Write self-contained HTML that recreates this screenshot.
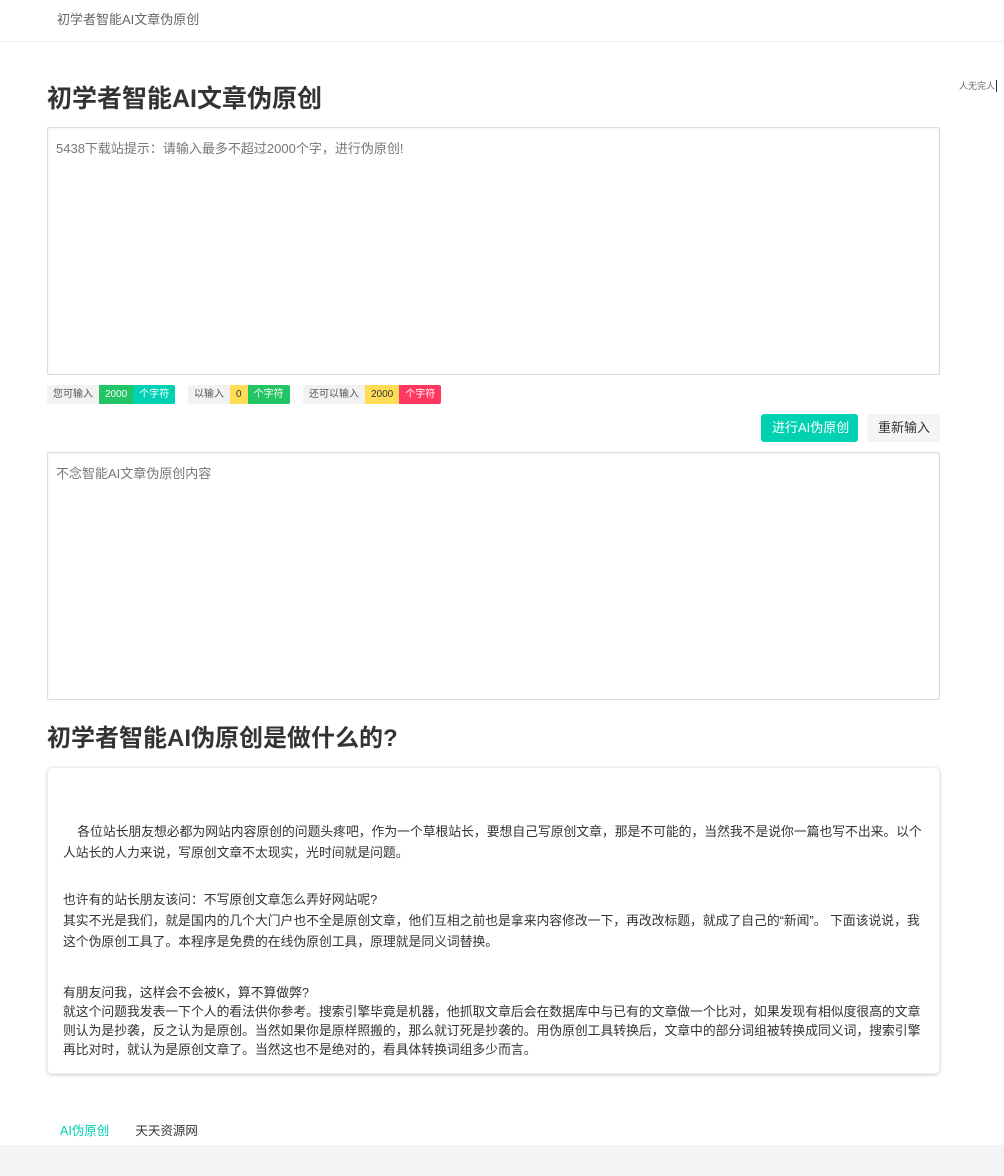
<!DOCTYPE html>
<html><head><meta charset="utf-8"><style>
*{box-sizing:border-box;margin:0;padding:0}
body{width:1004px;height:1176px;background:#fff;font-family:"Liberation Sans","Noto Sans CJK SC",sans-serif;color:#333;position:relative;overflow:hidden}
.hdr{height:42px;border-bottom:1px solid #eee;padding-left:57px;line-height:40px;font-size:13px;color:#666}
.side{position:absolute;left:959px;top:80px;font-size:9px;color:#666;border-right:1px solid #333;padding-right:1px;line-height:12px}
h1{position:absolute;left:47px;top:79px;font-size:25px;font-weight:bold;color:#333}
.ta{position:absolute;left:47px;width:893px;border:1px solid #ddd;border-radius:2px;padding:10px 8px;font-size:13px;color:#777;box-shadow:inset 0 1px 2px rgba(0,0,0,.06)}
.bd{position:absolute;top:385px;height:19px;font-size:10px;line-height:19px;display:flex;border-radius:2px;overflow:hidden;white-space:nowrap}
.bd span{padding:0 6px}
.g{background:#f2f2f2;color:#555}.gr{background:#22c463;color:#fff}.tq{background:#00d1b2;color:#fff}.y{background:#ffdd57;color:#333}.r{background:#ff3860;color:#fff}
.btn{position:absolute;top:414px;height:28px;line-height:28px;font-size:13px;border-radius:3px;padding:0 11px;white-space:nowrap}
h2{position:absolute;left:47px;top:718px;font-size:24px;font-weight:bold;color:#333}
.box{position:absolute;left:47px;top:767px;width:893px;height:307px;border-radius:5px;box-shadow:0 1px 3px rgba(0,0,0,.2);border:1px solid #eee;font-size:12.8px;line-height:20px;color:#333}
.box p{position:absolute;left:15px;right:15px}
.ft{position:absolute;top:1120px;left:60px;font-size:12.5px}
.band{position:absolute;top:1145px;left:0;width:1004px;height:31px;background:#f4f4f4}
</style></head><body>
<div class="hdr">初学者智能AI文章伪原创</div>
<div class="side">人无完人</div>
<h1>初学者智能AI文章伪原创</h1>
<div class="ta" style="top:127px;height:248px">5438下载站提示：请输入最多不超过2000个字，进行伪原创!</div>
<div class="bd" style="left:47px"><span class="g">您可输入</span><span class="gr">2000</span><span class="tq">个字符</span></div>
<div class="bd" style="left:188px"><span class="g">以输入</span><span class="y">0</span><span class="gr">个字符</span></div>
<div class="bd" style="left:303px"><span class="g">还可以输入</span><span class="y">2000</span><span class="r">个字符</span></div>
<div class="btn" style="left:761px;width:97px;background:#00d1b2;color:#fff">进行AI伪原创</div>
<div class="btn" style="left:867px;background:#f4f4f4;color:#333;width:73px">重新输入</div>
<div class="ta" style="top:452px;height:248px">不念智能AI文章伪原创内容</div>
<h2>初学者智能AI伪原创是做什么的?</h2>
<div class="box">
<p style="top:53px;line-height:21px">&nbsp;&nbsp;&nbsp;&nbsp;各位站长朋友想必都为网站内容原创的问题头疼吧，作为一个草根站长，要想自己写原创文章，那是不可能的，当然我不是说你一篇也写不出来。以个人站长的人力来说，写原创文章不太现实，光时间就是问题。</p>
<p style="top:121px;line-height:21px">也许有的站长朋友该问：不写原创文章怎么弄好网站呢?<br>其实不光是我们，就是国内的几个大门户也不全是原创文章，他们互相之前也是拿来内容修改一下，再改改标题，就成了自己的“新闻”。 下面该说说，我这个伪原创工具了。本程序是免费的在线伪原创工具，原理就是同义词替换。</p>
<p style="top:215px;line-height:19px">有朋友问我，这样会不会被K，算不算做弊?<br>就这个问题我发表一下个人的看法供你参考。搜索引擎毕竟是机器，他抓取文章后会在数据库中与已有的文章做一个比对，如果发现有相似度很高的文章则认为是抄袭，反之认为是原创。当然如果你是原样照搬的，那么就订死是抄袭的。用伪原创工具转换后，文章中的部分词组被转换成同义词，搜索引擎再比对时，就认为是原创文章了。当然这也不是绝对的，看具体转换词组多少而言。</p>
</div>
<div class="ft"><span style="color:#00d1b2">AI伪原创</span><span style="margin-left:26px;color:#333">天天资源网</span></div>
<div class="band"></div>
</body></html>
